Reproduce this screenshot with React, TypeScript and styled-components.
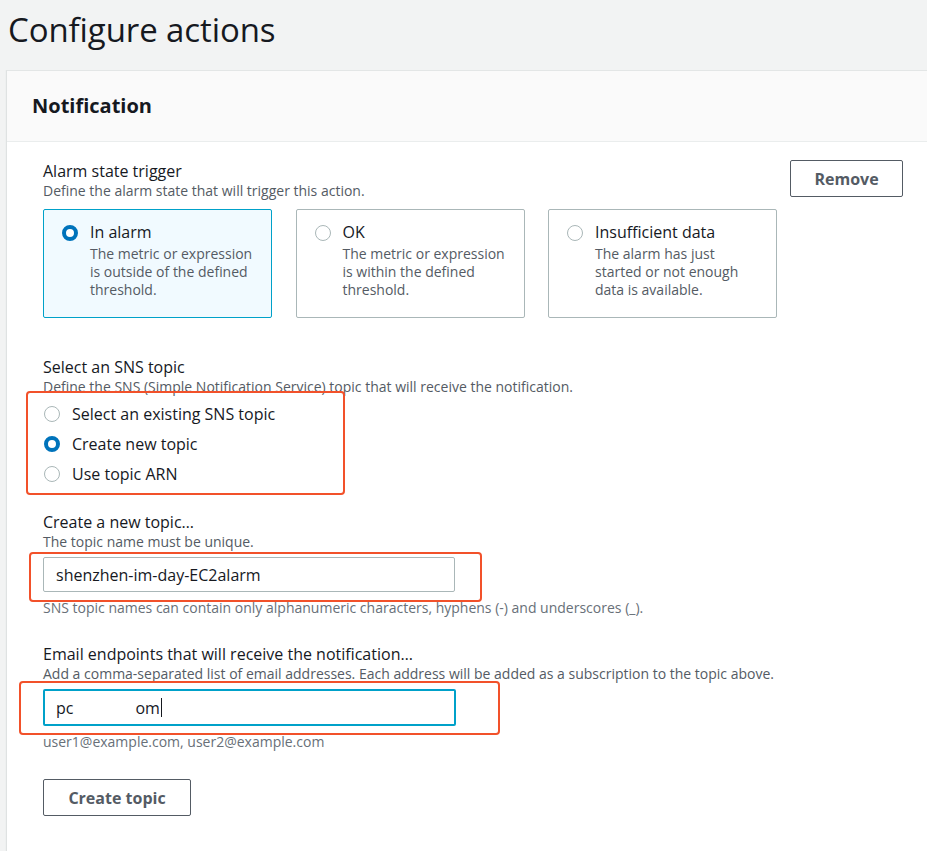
import React from "react";
import styled, { createGlobalStyle } from "styled-components";

const GlobalStyle = createGlobalStyle`
  html, body { margin: 0; padding: 0; }
  body {
    background: #f2f3f3;
    font-family: "Open Sans", "Noto Sans", sans-serif;
    color: #16191f;
    overflow-x: hidden;
  }
  * { box-sizing: border-box; }
`;

const Page = styled.div`
  display: flex;
  flex-direction: column;
  min-height: 851px;
`;

const Title = styled.h1`
  margin: 0;
  padding: 10px 0 0 8px;
  height: 70px;
  font-size: 33px;
  line-height: 40px;
  font-weight: 400;
  letter-spacing: -0.1px;
  color: #16191f;
`;

const Panel = styled.section`
  flex: 1;
  margin-left: 6px;
  margin-right: -20px;
  background: #fff;
  border-top: 1px solid #e3e6e6;
  border-left: 1px solid #dfe2e2;
  box-shadow: -1px 0 0 #eef0f0;
`;

const PanelHeader = styled.header`
  height: 71px;
  display: flex;
  align-items: center;
  padding-left: 25px;
  background: #fafafa;
  border-bottom: 1px solid #eaeded;
`;

const PanelTitle = styled.h2`
  margin: 0;
  font-size: 20px;
  font-weight: 700;
  line-height: 26px;
  color: #16191f;
`;

const PanelBody = styled.div`
  position: relative;
  padding: 18px 44px 40px 36px;
  display: flex;
  flex-direction: column;
`;

const TopRow = styled.div`
  display: flex;
  justify-content: space-between;
  align-items: flex-start;
`;

const Field = styled.div<{ $gap?: number }>`
  display: flex;
  flex-direction: column;
  margin-top: ${(p) => p.$gap ?? 0}px;
`;

const Label = styled.div`
  font-size: 16px;
  line-height: 22px;
  color: #16191f;
`;

const Description = styled.div`
  font-size: 14px;
  line-height: 18px;
  color: #545b64;
  white-space: nowrap;
`;

const Hint = styled.div`
  font-size: 14px;
  line-height: 18px;
  color: #687078;
  margin-top: 7px;
  white-space: nowrap;
`;

const Tiles = styled.div`
  display: grid;
  grid-template-columns: repeat(3, 229px);
  column-gap: 23.5px;
  margin-top: 9px;
`;

const Tile = styled.div<{ $selected?: boolean }>`
  height: 109px;
  display: flex;
  gap: 12px;
  padding: 11px 10px 0 18px;
  border: 1px solid ${(p) => (p.$selected ? "#00a1c9" : "#aab7b8")};
  border-radius: 2px;
  background: ${(p) => (p.$selected ? "#f1faff" : "#fff")};
`;

const Radio = styled.span<{ $checked?: boolean }>`
  flex: none;
  width: 16px;
  height: 16px;
  border-radius: 50%;
  margin-top: 4px;
  background: #fff;
  border: ${(p) => (p.$checked ? "4.5px solid #0073bb" : "1.5px solid #aab7b8")};
`;

const TileText = styled.div`
  display: flex;
  flex-direction: column;
`;

const TileTitle = styled.div`
  font-size: 16px;
  line-height: 22px;
  margin-bottom: 2px;
  color: #16191f;
`;

const TileDesc = styled.div`
  font-size: 14px;
  line-height: 18px;
  color: #545b64;
  white-space: nowrap;
`;

const Button = styled.button<{ $width: number }>`
  width: ${(p) => p.$width}px;
  height: 37px;
  padding: 0;
  background: #fff;
  border: 1px solid #545b64;
  border-radius: 2px;
  font-family: inherit;
  font-size: 16px;
  font-weight: 700;
  color: #545b64;
`;

const RadioGroup = styled.div`
  position: relative;
  display: flex;
  flex-direction: column;
  margin-top: 3px;
`;

const RadioRow = styled.div`
  height: 30px;
  display: flex;
  align-items: center;
  gap: 12px;
  padding-left: 1px;
  font-size: 16px;
  color: #16191f;
  & > span { margin-top: 0; }
`;

const InputWrap = styled.div`
  position: relative;
  margin-top: 6px;
`;

const Input = styled.div<{ $focused?: boolean; $width: number }>`
  width: ${(p) => p.$width}px;
  height: ${(p) => (p.$focused ? 37 : 35)}px;
  display: flex;
  align-items: center;
  padding-left: ${(p) => (p.$focused ? 11 : 12)}px;
  border: ${(p) => (p.$focused ? "2px solid #00a1c9" : "1px solid #aab7b8")};
  border-radius: 2px;
  background: #fff;
  font-size: 16px;
  color: #16191f;
  white-space: nowrap;
`;

const Redacted = styled.span<{ $w: number }>`
  display: inline-block;
  width: ${(p) => p.$w}px;
  height: 20px;
`;

const Caret = styled.span`
  display: inline-block;
  width: 1px;
  height: 19px;
  margin-left: 1px;
  background: #16191f;
`;

const Annotation = styled.div<{ $l: number; $t: number; $w: number; $h: number }>`
  position: absolute;
  left: ${(p) => p.$l}px;
  top: ${(p) => p.$t}px;
  width: ${(p) => p.$w}px;
  height: ${(p) => p.$h}px;
  border: 2px solid #f2512a;
  border-radius: 4px;
  pointer-events: none;
`;

const ButtonRow = styled.div`
  margin-top: 28px;
`;

const tiles = [
  { title: "In alarm", desc: ["The metric or expression", "is outside of the defined", "threshold."], selected: true },
  { title: "OK", desc: ["The metric or expression", "is within the defined", "threshold."], selected: false },
  { title: "Insufficient data", desc: ["The alarm has just", "started or not enough", "data is available."], selected: false },
];

const topics = [
  { label: "Select an existing SNS topic", checked: false },
  { label: "Create new topic", checked: true },
  { label: "Use topic ARN", checked: false },
];

export default function App() {
  return (
    <Page>
      <GlobalStyle />
      <Title>Configure actions</Title>
      <Panel>
        <PanelHeader>
          <PanelTitle>Notification</PanelTitle>
        </PanelHeader>
        <PanelBody>
          <TopRow>
            <Field>
              <Label>Alarm state trigger</Label>
              <Description>Define the alarm state that will trigger this action.</Description>
              <Tiles>
                {tiles.map((t) => (
                  <Tile key={t.title} $selected={t.selected}>
                    <Radio $checked={t.selected} />
                    <TileText>
                      <TileTitle>{t.title}</TileTitle>
                      {t.desc.map((d) => (
                        <TileDesc key={d}>{d}</TileDesc>
                      ))}
                    </TileText>
                  </Tile>
                ))}
              </Tiles>
            </Field>
            <Button $width={113}>Remove</Button>
          </TopRow>

          <Field $gap={38}>
            <Label>Select an SNS topic</Label>
            <Description>Define the SNS (Simple Notification Service) topic that will receive the notification.</Description>
            <RadioGroup>
              {topics.map((t) => (
                <RadioRow key={t.label}>
                  <Radio $checked={t.checked} />
                  {t.label}
                </RadioRow>
              ))}
              <Annotation $l={-17} $t={-8} $w={319} $h={104} />
            </RadioGroup>
          </Field>

          <Field $gap={22}>
            <Label>Create a new topic…</Label>
            <Description>The topic name must be unique.</Description>
            <InputWrap>
              <Input $width={412}>shenzhen-im-day-EC2alarm</Input>
              <Annotation $l={-14} $t={-5} $w={453} $h={50} />
            </InputWrap>
            <Hint>SNS topic names can contain only alphanumeric characters, hyphens (-) and underscores (_).</Hint>
          </Field>

          <Field $gap={26}>
            <Label>Email endpoints that will receive the notification…</Label>
            <Description>Add a comma-separated list of email addresses. Each address will be added as a subscription to the topic above.</Description>
            <InputWrap>
              <Input $focused $width={413}>
                pc
                <Redacted $w={62} />
                om
                <Caret />
              </Input>
              <Annotation $l={-24} $t={-8} $w={481} $h={54} />
            </InputWrap>
            <Hint>user1@example.com, user2@example.com</Hint>
          </Field>

          <ButtonRow>
            <Button $width={148}>Create topic</Button>
          </ButtonRow>
        </PanelBody>
      </Panel>
    </Page>
  );
}
